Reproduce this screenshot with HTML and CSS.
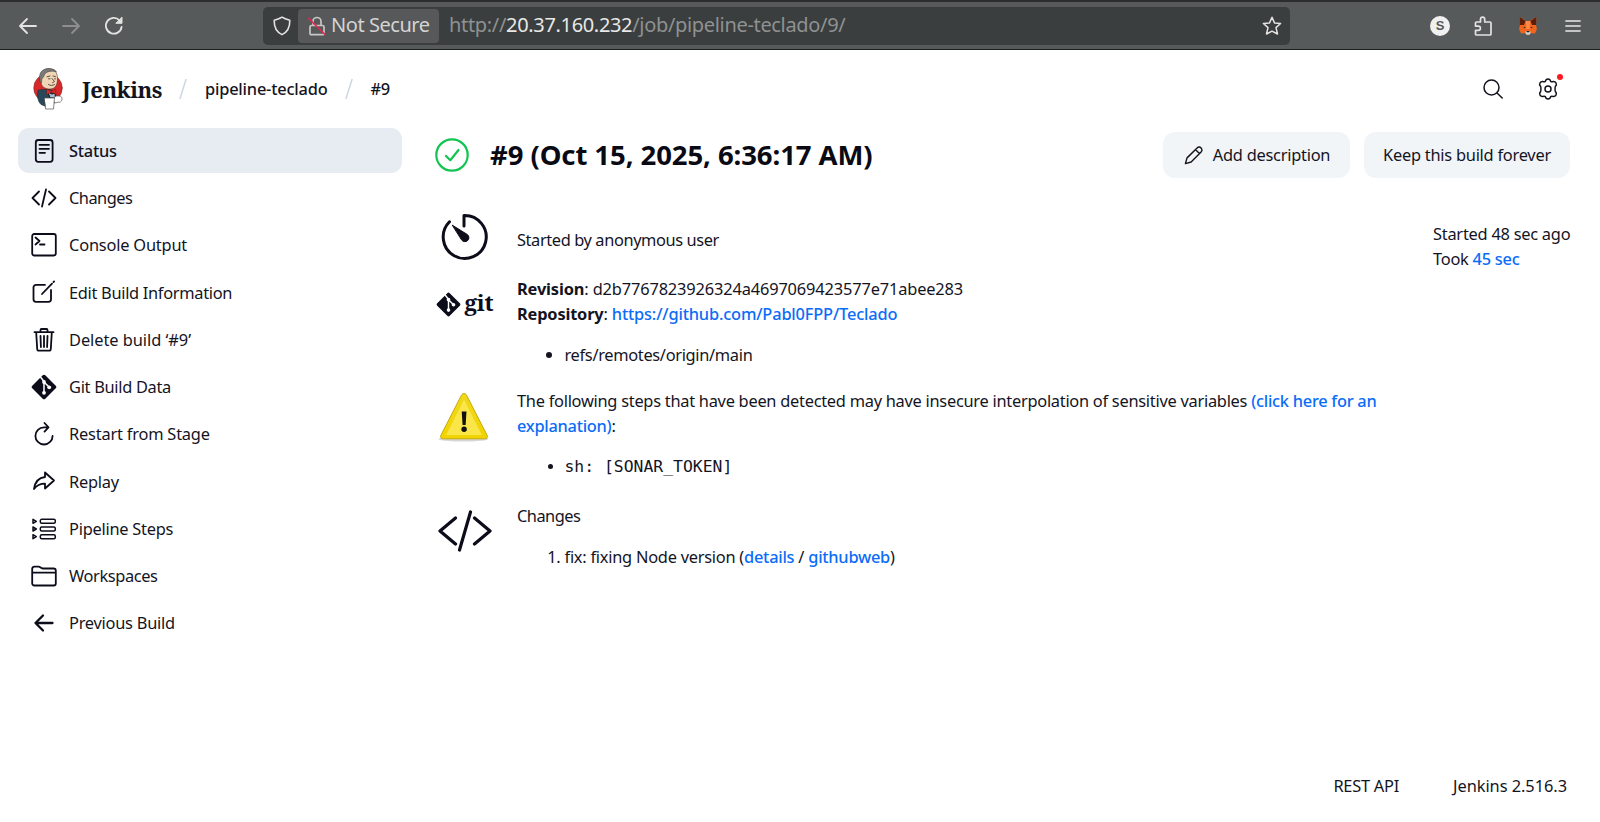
FILE: index.html
```html
<!DOCTYPE html>
<html lang="en">
<head>
<meta charset="utf-8">
<title>pipeline-teclado #9 - Jenkins</title>
<link rel="stylesheet" href="styles.css">
</head>
<body>
<div class="toolbar">
  <div class="nav-buttons">
    <svg class="nav-ico" viewBox="0 0 20 20"><path d="M18 10H2M9 3L2 10l7 7" /></svg>
    <svg class="nav-ico nav-off" viewBox="0 0 20 20"><path d="M2 10h16M11 3l7 7-7 7" /></svg>
    <svg class="nav-ico" viewBox="0 0 20 20"><path d="M17.600 11A7.900 7.900 0 1 1 15.500 4.300"/><path class="solid" d="M18 1.500v5.800h-5.800z"/></svg>
  </div>
  <div class="urlbar">
    <svg class="shield" viewBox="0 0 18 20"><path d="M9 1.200C6.500 3 4 3.600 1.200 4.200C1 11 3.500 16 9 18.600C14.500 16 17 11 16.800 4.200C14 3.600 11.500 3 9 1.200Z"/></svg>
    <div class="insecure">
      <svg class="lock" viewBox="0 0 18 20"><path d="M5 9V5.500a4 4 0 0 1 8 0V9M3.500 9.500h11a1.500 1.500 0 0 1 1.500 1.500v6.500a1.200 1.200 0 0 1-1.200 1.200H3.200A1.200 1.200 0 0 1 2 17.500V11A1.500 1.500 0 0 1 3.500 9.500Z"/><path class="slash" d="M.8 2.500L17 18.500"/></svg>
      <span class="insecure-text">Not Secure</span>
    </div>
    <div class="url">http://<span class="host">20.37.160.232</span>/job/pipeline-teclado/9/</div>
    <svg class="star" viewBox="0 0 20 20"><path d="M10 1.300l2.500 5.600 6.100.6-4.600 4.100 1.500 6.400L10 15.100 4.500 18l1.500-6.400L1.400 7.500l6.100-.6z"/></svg>
  </div>
  <div class="ext">
    <span class="s-badge">S</span>
    <svg class="puzzle" viewBox="0 0 18 20"><path d="M2.500 6H6.500V3.300a2.100 2.100 0 0 1 4.200 0V6H16a1 1 0 0 1 1 1v11a1 1 0 0 1-1 1H2.500a1 1 0 0 1-1-1v-3.600H4.300a2.100 2.100 0 0 0 0-4.200H1.500V7a1 1 0 0 1 1-1"/></svg>
    <svg class="fox" viewBox="0 0 18 18"><path fill="#f2651d" d="M.6 0L7 4h4L17.400 0 17 8l.9 4-2 4.500-4.400-.5-1.200 1.500H7.700L6.500 16l-4.400.5L.1 12 1 8z"/><path fill="#5e1f0a" d="M.6 0L6.500 4 5 8 1 8zM17.400 0L11.500 4 13 8l4 0z"/><path fill="#ff8a4a" d="M6.800 4h4.400L10.500 12h-3z"/><path fill="#d8d2cf" d="M6.800 14h4.400l.5 2-1.200 1.800h-3L6.300 16z"/><path fill="#222" d="M7.500 14h3v1.300h-3zM4.500 9.500l2.200 1.200-1.700.5zM13.500 9.500l-2.200 1.200 1.700.5z"/></svg>
    <svg class="menu" viewBox="0 0 16 14"><path d="M1 2h14M1 7h14M1 12h14"/></svg>
  </div>
</div>

<header class="header">
  <svg class="butler" viewBox="0 0 30 42">
    <circle cx="15" cy="20" r="14.300" fill="#d8282a" stroke="#7a2a28" stroke-width=".5"/>
    <path fill="#28485a" stroke="#1f2f3a" stroke-width=".6" d="M5 22.500c-1 5-.5 10.500 3 14l5 2 8-3c3-4 2.500-8 .5-12l-5-2H9z"/>
    <path fill="#f0d6b7" stroke="#4a3b30" stroke-width=".6" d="M7.500 10.500C7 4 11 .8 16 .8S24.500 4 24.500 10.500c0 6-2 10.500-7.500 10.500-5.500 0-8.500-2.500-9-6.500-1.300-.8-1.500-3-.5-4z"/>
    <path fill="#7b7a79" stroke="#3a3836" stroke-width=".5" d="M6.800 12C5.500 5 9 1 15 .6 19 .5 22 1.500 23.500 4 20 2.400 14 3 11.800 6 10.800 8.500 10 10 9 10.500l-.5 4z"/>
    <path fill="none" stroke="#3b2c24" stroke-width=".8" d="M14 8.800l3-.8M20 8l2.500.6M19 10.500l2.500 3-2 1.200M15.500 16.500c2 1.300 4 1.300 6 0M15.500 10.800h1.500M21.500 10.800h1"/>
    <path fill="#a9bccb" d="M15 24l4 2 3-1 .5 5h-5z"/>
    <path fill="#d8282a" stroke="#7c1613" stroke-width=".5" d="M14 21.300l4.200 2 4.300-2.200.7 5.200-4.800-2-4.600 2.200z"/>
    <path fill="#fff" stroke="#55504c" stroke-width=".7" d="M21.500 29.500c1-2 3-1.500 4.500-1.500 2 0 3.500 1.200 3 3.500s-2.500 3.500-4 2.500c-1.500 1-2.500 1-3.800.5M11.500 30h10l-1 11h-7.500z"/>
  </svg>
  <span class="brand">Jenkins</span>
  <svg class="sep sep-a" viewBox="0 0 8 20"><path d="M7 .5L1 19.500"/></svg>
  <a class="crumb c1">pipeline-teclado</a>
  <svg class="sep sep-b" viewBox="0 0 8 20"><path d="M7 .5L1 19.500"/></svg>
  <a class="crumb c2">#9</a>
  <div class="header-actions">
    <svg class="search" viewBox="0 0 20 20"><circle cx="8.500" cy="8.500" r="7.500"/><path d="M14 14l5.200 5"/></svg>
    <div class="gear-wrap">
      <svg class="gear" viewBox="0 0 22 22"><path d="M8.300 3.400C8.700 1.700 9.700 1 11 1s2.300.7 2.700 2.400c.5.400 1 .5 1.600.3 1.700-.5 3 0 3.700 1.200.7 1.200.5 2.500-.7 3.700-.3.500-.3 4.300 0 4.800 1.200 1.200 1.400 2.500.7 3.700-.7 1.200-2 1.700-3.700 1.200-.6-.2-1.100-.1-1.600.3C13.300 20.300 12.300 21 11 21s-2.300-.7-2.700-2.400c-.5-.4-1-.5-1.600-.3-1.700.5-3 0-3.700-1.200-.7-1.200-.5-2.500.7-3.700.3-.5.300-4.300 0-4.800C2.500 7.400 2.300 6.100 3 4.900c.7-1.200 2-1.700 3.700-1.200.6.200 1.100.1 1.600-.3z"/><circle cx="11" cy="11" r="3"/></svg>
      <span class="dot"></span>
    </div>
  </div>
</header>

<div class="page">
  <nav class="side">
    <a class="task active"><svg class="ico" viewBox="0 0 26 26"><rect x="4.800" y="2" width="16.800" height="21.800" rx="2.500"/><path d="M8.500 6.800h9.500M8.500 10.800h9.500M8.500 14.800h5.500"/></svg><span class="label status">Status</span></a>
    <a class="task"><svg class="ico" viewBox="0 0 26 26"><path d="M8 6.500L1.500 13 8 19.500M18 6.500l6.500 6.500-6.500 6.500M15 4.500l-4 17"/></svg><span class="label changes">Changes</span></a>
    <a class="task"><svg class="ico" viewBox="0 0 26 26"><rect x="1.200" y="2" width="23.600" height="21.500" rx="2"/><path d="M4.500 5.500L8.500 9l-4 3.500M9 12.500h4.500"/></svg><span class="label console">Console Output</span></a>
    <a class="task"><svg class="ico" viewBox="0 0 26 26"><path d="M14 5.800H5a2.500 2.500 0 0 0-2.500 2.500v12A2.500 2.500 0 0 0 5 22.800h12.500a2.500 2.500 0 0 0 2.500-2.500V11M11 15L21 4.600M22.500 3l.6-.6"/></svg><span class="label edit">Edit Build Information</span></a>
    <a class="task"><svg class="ico" viewBox="0 0 26 26"><path d="M5.200 5.500l1 16.500a1.800 1.800 0 0 0 1.800 1.700h10a1.800 1.800 0 0 0 1.800-1.700l1-16.500M3.500 5.200h19M9.500 5V3a1 1 0 0 1 1-1h5a1 1 0 0 1 1 1v2M9.500 9l.4 11M13 9v11M16.500 9l-.4 11"/></svg><span class="label delete">Delete build ‘#9’</span></a>
    <a class="task"><svg class="ico" viewBox="0 0 26 26"><rect class="fill" x="3.800" y="3.800" width="18.400" height="18.400" rx="1.800" transform="rotate(45 13 13)"/><path class="cut" d="M8.500 1.800l4.500 5.700v11.500M13.500 8.500l4.800 4.800"/><circle class="cutfill" cx="13" cy="8" r="1.900"/><circle class="cutfill" cx="13" cy="18.800" r="1.900"/><circle class="cutfill" cx="18.200" cy="13.300" r="1.900"/></svg><span class="label gitdata">Git Build Data</span></a>
    <a class="task"><svg class="ico" viewBox="0 0 26 26"><path d="M17 6.300H13A8.600 8.600 0 1 0 21.600 14.900M13.500 2l4 4.300-4 4.300" /></svg><span class="label restart">Restart from Stage</span></a>
    <a class="task"><svg class="ico" viewBox="0 0 26 26"><path d="M14 4.500l9 8-9 8v-4.800c-5 0-8 1.200-11 5.300 1-7 4.500-11.300 11-12z"/></svg><span class="label replay">Replay</span></a>
    <a class="task"><svg class="ico" viewBox="0 0 26 26"><g class="thin"><rect x="9.300" y="3.300" width="15" height="4" rx="1.500"/><rect x="9.300" y="11" width="15" height="4" rx="1.500"/><rect x="9.300" y="18.700" width="15" height="4" rx="1.500"/><path d="M2 3.300v4l3.300-2zM2 11v4l3.300-2zM2 18.700v4l3.300-2z"/></g></svg><span class="label steps">Pipeline Steps</span></a>
    <a class="task"><svg class="ico" viewBox="0 0 26 26"><path d="M1.200 20.500V5.800A2.200 2.200 0 0 1 3.400 3.600h4.200c1.500 0 2.500 1.900 4 1.900h11a2.200 2.200 0 0 1 2.200 2.200v12.800a2 2 0 0 1-2 2H3.200a2 2 0 0 1-2-2zM1.200 9.700h23.600"/></svg><span class="label workspaces">Workspaces</span></a>
    <a class="task"><svg class="ico bold" viewBox="0 0 26 26"><path d="M21.500 13H4.500M12 5.500L4.500 13l7.500 7.500"/></svg><span class="label previous">Previous Build</span></a>
  </nav>

  <main class="main">
    <div class="title-row">
      <svg class="ok" viewBox="0 0 34 34"><circle cx="17" cy="17" r="15.700"/><path d="M11 18l4.300 4.200L23.500 12"/></svg>
      <h1 class="title">#9 (Oct 15, 2025, 6:36:17 AM)</h1>
      <div class="btn btn-a"><svg class="pencil" viewBox="0 0 20 20"><path d="M1.500 18.500l1.700-6L13.800 2a2.800 2.800 0 0 1 4.200 4.200L7.500 16.800zM12 3.800l4.200 4.200"/></svg><span>Add description</span></div>
      <div class="btn btn-b"><span>Keep this build forever</span></div>
    </div>

    <div class="body-row">
      <div class="entries">
        <section class="entry e1">
          <svg class="timer" viewBox="0 0 48 48"><path d="M9.500 8.800A21.500 21.500 0 1 0 24 2.500V13"/><path class="solid" d="M12.500 12.300l14.800 9.200a4 4 0 1 1-5.600 5.600z"/></svg>
          <div class="text"><span class="cause">Started by anonymous user</span></div>
        </section>
        <section class="entry e2">
          <div class="gitlogo"><svg class="gitmark" viewBox="0 0 26 26"><rect class="fill" x="3.800" y="3.800" width="18.400" height="18.400" rx="1.800" transform="rotate(45 13 13)"/><path class="cut" d="M8.500 1.800l4.500 5.700v11.500M13.500 8.500l4.800 4.800"/><circle class="cutfill" cx="13" cy="8" r="1.900"/><circle class="cutfill" cx="13" cy="18.800" r="1.900"/><circle class="cutfill" cx="18.200" cy="13.300" r="1.900"/></svg><span class="gitword">git</span></div>
          <div class="text">
            <div class="rev"><b>Revision</b>: d2b7767823926324a4697069423577e71abee283</div>
            <div class="repo"><b>Repository</b>: <a class="link">https://github.com/Pabl0FPP/Teclado</a></div>
            <ul class="list refs"><li>refs/remotes/origin/main</li></ul>
          </div>
        </section>
        <section class="entry e3">
          <svg class="warn" viewBox="0 0 52 52">
            <defs><linearGradient id="y" x1="0" y1="0" x2="0" y2="1"><stop offset="0" stop-color="#efd91c"/><stop offset="1" stop-color="#f0d400"/></linearGradient></defs>
            <ellipse cx="25.500" cy="48" rx="25" ry="2.600" fill="#000" opacity=".16"/>
            <path d="M26 2.500c1.200 0 2 .7 2.600 1.800l20.500 40c.9 2-.2 3.500-2.300 3.500H5.200c-2.100 0-3.200-1.500-2.300-3.500l20.500-40C24 3.200 24.800 2.500 26 2.500z" fill="url(#y)" stroke="#c9a90a" stroke-width="1"/>
            <path d="M26 8.500l17.800 35.500H8.200z" fill="#fbe64a"/>
            <path d="M23.700 20.500h4.800l-.9 13.500h-3z" fill="#111"/><circle cx="26.100" cy="38.300" r="2.700" fill="#111"/>
          </svg>
          <div class="text">
            <div class="notice">The following steps that have been detected may have insecure interpolation of sensitive variables <a class="link">(click here for an explanation)</a>:</div>
            <ul class="list mono"><li>sh: [SONAR_TOKEN]</li></ul>
          </div>
        </section>
        <section class="entry e4">
          <svg class="code" viewBox="0 0 54 42"><path d="M17.500 8L2 21l15.500 13M36.500 8L52 21 36.500 34M32.500 2l-11 38"/></svg>
          <div class="text">
            <div class="changes">Changes</div>
            <ol class="list commits"><li>fix: fixing Node version (<a class="link">details</a> / <a class="link">githubweb</a>)</li></ol>
          </div>
        </section>
      </div>
      <aside class="times">
        <div>Started 48 sec ago</div>
        <div>Took <a class="link">45 sec</a></div>
      </aside>
    </div>
  </main>
</div>

<footer class="footer"><span class="rest">REST API</span><span class="version">Jenkins 2.516.3</span></footer>
</body>
</html>
```
FILE: styles.css
```css
* { box-sizing: border-box; }
body { margin: 0; width: 1600px; height: 822px; background: #fff; color: #14141f; font: 16.4px/24.5px "Noto Sans", "Open Sans", sans-serif; letter-spacing: -.25px; display: flex; flex-direction: column; overflow: hidden; }
svg { fill: none; stroke: currentColor; stroke-linecap: round; stroke-linejoin: round; flex: none; }

.toolbar { height: 50px; border-top: 2px solid #2b2d2e; border-bottom: 1px solid #1d1f20; background: #565a5b; display: flex; align-items: center; color: #e3e3e1; flex: none; }
.nav-buttons { display: flex; gap: 23px; padding-left: 18px; width: 263px; }
.nav-ico { width: 20px; height: 20px; stroke-width: 1.800; }
.nav-off { color: #8d8f8f; }
.solid { fill: currentColor; stroke-width: 1; }
.urlbar { width: 1027px; height: 38px; background: #3a3e3f; border-radius: 5px; display: flex; align-items: center; padding: 0 8.500px 0 10px; }
.shield { width: 18px; height: 20px; stroke-width: 1.600; }
.insecure { margin-left: 7px; width: 141px; height: 34px; border-radius: 4px; background: #57585a; display: flex; align-items: center; gap: 5px; padding-left: 10px; font-size: 20px; letter-spacing: -.45px; white-space: nowrap; color: #d4d4d2; }
.lock { width: 18px; height: 20px; stroke-width: 1.700; color: #c6c6c4; }
.slash { stroke: #e22850; }
.url { margin-left: 10px; font-size: 20px; letter-spacing: -.33px; color: #8f9191; flex: 1; white-space: nowrap; }
.host { color: #e8e8e6; }
.star { width: 20px; height: 20px; stroke-width: 1.500; }
.ext { display: flex; align-items: center; padding-left: 140px; }
.s-badge { width: 20px; height: 20px; border-radius: 50%; background: #f0f0ee; color: #55585a; font: bold 13px/20px "Liberation Sans", sans-serif; letter-spacing: 0; text-align: center; }
.puzzle { width: 18px; height: 20px; margin-left: 24px; stroke-width: 1.700; }
.fox { width: 18px; height: 18px; margin-left: 27px; stroke: none; }
.menu { width: 16px; height: 14px; margin-left: 28px; stroke-width: 1.800; color: #c4c5c4; }

.header { height: 78px; display: flex; align-items: center; flex: none; padding: 0 31px 0 33px; }
.butler { width: 30px; height: 42px; }
.brand { margin: -1px 0 0 19px; width: 80px; font: bold 22px/30px "Noto Serif", "DejaVu Serif", serif; letter-spacing: -.45px; white-space: nowrap; }
.sep { width: 8px; height: 20px; color: #cdd6e6; stroke-width: 1.500; }
.sep-a { margin-left: 17px; }
.crumb { font-weight: 500; letter-spacing: -.2px; white-space: nowrap; }
.c1 { margin-left: 18px; }
.sep-b { margin-left: 17.500px; }
.c2 { margin-left: 17.500px; }
.header-actions { margin-left: auto; display: flex; align-items: center; gap: 34px; padding-right: 10px; }
.search { width: 20px; height: 20px; stroke-width: 1.500; }
.gear-wrap { position: relative; display: flex; }
.gear { width: 22px; height: 22px; stroke-width: 1.500; }
.dot { position: absolute; right: -4px; top: -4px; width: 6px; height: 6px; border-radius: 50%; background: #fb1a1f; }

.page { display: flex; flex: 1; }
.side { width: 384px; margin-left: 18px; display: flex; flex-direction: column; gap: 2.260px; }
.task { height: 45px; border-radius: 11px; display: flex; align-items: center; gap: 12.500px; padding-left: 12.500px; white-space: nowrap; }
.active { background: #e7ebf2; font-weight: 500; }
.label { padding-top: 1.200px; }
.changes { letter-spacing: -.52px; }
.edit { letter-spacing: -.31px; }
.delete { letter-spacing: -.05px; }
.gitdata { letter-spacing: -.3px; }
.restart, .console { letter-spacing: -.2px; }
.workspaces { letter-spacing: -.4px; }
.ico { width: 26px; height: 26px; stroke-width: 1.800; color: #0c0c1a; }
.thin { stroke-width: 1.500; }
.bold { stroke-width: 2.300; }
.fill { fill: currentColor; stroke: none; }
.cut { stroke: #fff; stroke-width: 1.500; }
.cutfill { fill: #fff; stroke: none; }

.main { margin-left: 32px; width: 1136px; padding-top: 4px; }
.title-row { display: flex; align-items: center; height: 46px; }
.ok { width: 34px; height: 34px; margin-left: .5px; color: #13c452; stroke-width: 2.200; }
.title { margin: 0 auto 0 21.500px; font-size: 27.500px; line-height: 36px; letter-spacing: -.08px; font-weight: 700; color: #0a0a14; white-space: nowrap; }
.btn { height: 46px; border-radius: 12px; background: #f2f5f8; display: flex; align-items: center; justify-content: center; white-space: nowrap; padding-top: 1px; }
.btn-a { width: 187px; gap: 10px; margin-right: 14px; padding-left: 1px; }
.btn-b { width: 206px; }
.pencil { width: 19px; height: 19px; stroke-width: 1.500; }

.body-row { display: flex; justify-content: space-between; padding-top: 34px; }
.entries { width: 965px; }
.entry { display: flex; }
.entry > svg, .gitlogo { flex: none; }
.text { flex: 1; }
.e1 { height: 65px; }
.e2 { height: 110.500px; }
.e3 { height: 116.500px; }
.timer { width: 48px; height: 48px; margin: .5px 29px 0 6px; stroke-width: 3; color: #0c0c1a; }
.e1 .text { padding-top: 16px; }
.cause { letter-spacing: -.4px; }
.rev { letter-spacing: -.15px; }
.repo { letter-spacing: -.18px; line-height: 24px; }
.refs { letter-spacing: -.32px; }
.notice { letter-spacing: -.27px; line-height: 25px; }
.gitlogo { width: 58px; margin: 14px 23px 0 2px; height: 26px; display: flex; align-items: center; gap: 3.500px; color: #0c0c1a; }
.gitmark { width: 25px; height: 25px; }
.gitword { font: bold 22.500px/24px "Noto Serif", "DejaVu Serif", serif; margin-top: -3px; }
.warn { width: 52px; height: 52px; stroke: none; margin: 3px 27px 0 4px; }
.code { width: 54px; height: 42px; margin: 6px 25px 0 4px; stroke-width: 3.200; color: #0c0c1a; }
.list { margin: 17px 0 0; padding-left: 47.500px; }
.mono { font-family: "DejaVu Sans Mono", monospace; letter-spacing: 0; }
.commits { margin-top: 16.500px; }
.link { color: #0b6cf8; font-weight: 500; }
.times { padding-top: 9px; width: 137px; line-height: 25px; white-space: nowrap; }

.footer { display: flex; justify-content: flex-end; gap: 54px; padding: 0 33px 24px 0; white-space: nowrap; }
.version { letter-spacing: -.05px; }
```
